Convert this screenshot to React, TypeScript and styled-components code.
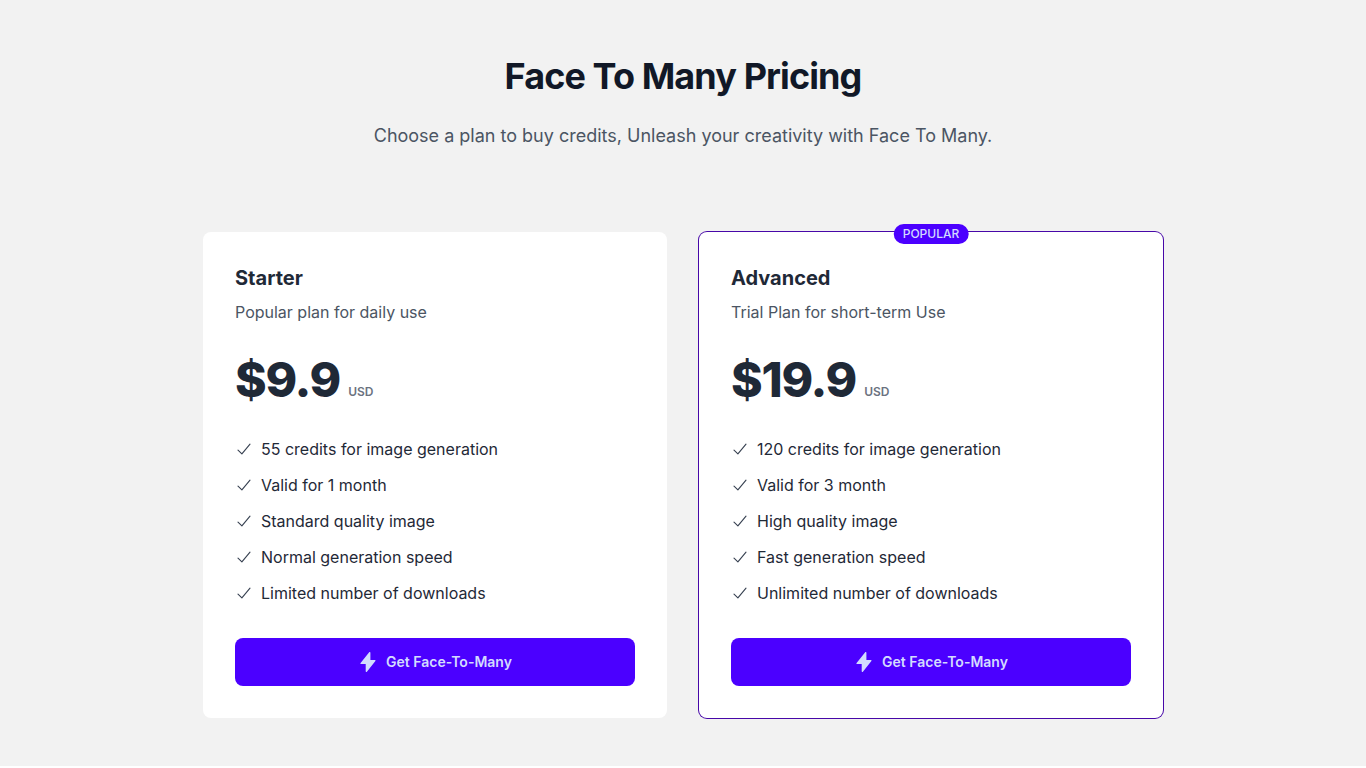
import React from "react";
import styled, { createGlobalStyle } from "styled-components";

const GlobalStyle = createGlobalStyle`
  *, *::before, *::after { box-sizing: border-box; }
  body {
    margin: 0;
    background: #fff;
    color: #1f2937;
    font-family: Inter, "Liberation Sans", sans-serif;
    font-size: 16px;
    line-height: 24px;
  }
  h1, h2, p, ul { margin: 0; padding: 0; }
`;

const Page = styled.main`
  background: #f2f2f2;
`;

const Container = styled.div`
  max-width: 1024px;
  margin: 0 auto;
  padding: 56px 32px 48px;
`;

const Header = styled.header`
  text-align: center;
  margin-bottom: 80px;
`;

const Title = styled.h1`
  color: #111827;
  font-size: 36px;
  line-height: 40px;
  font-weight: 700;
  letter-spacing: -0.025em;
`;

const Lead = styled.p`
  margin-top: 24px;
  color: #4b5563;
  font-size: 18px;
  line-height: 32px;
`;

const Plans = styled.div`
  display: grid;
  grid-template-columns: repeat(auto-fit, minmax(320px, 1fr));
  gap: 32px;
`;

const Card = styled.section<{ $popular?: boolean }>`
  position: relative;
  padding: 32px;
  border-radius: 8px;
  background: #fff;
  box-shadow: ${(p) => (p.$popular ? "0 0 0 1px #4708a8" : "none")};
`;

const Badge = styled.span`
  position: absolute;
  top: -8px;
  left: 50%;
  transform: translateX(-50%);
  padding: 0 9px;
  border-radius: 10px;
  background: #4b00ff;
  color: #d3dbff;
  font-size: 12px;
  line-height: 20px;
  font-weight: 500;
`;

const PlanName = styled.h2`
  font-size: 20px;
  line-height: 28px;
  font-weight: 700;
`;

const PlanNote = styled.p`
  margin-top: 8px;
  color: #4b5563;
`;

const Price = styled.p`
  display: flex;
  align-items: flex-end;
  gap: 8px;
  margin: 32px 0 33px;
`;

const Amount = styled.span`
  font-size: 48px;
  line-height: 48px;
  font-weight: 800;
  letter-spacing: -0.025em;
`;

const Currency = styled.span`
  color: #6b7280;
  font-size: 12px;
  line-height: 24px;
  font-weight: 600;
`;

const Features = styled.ul`
  display: grid;
  gap: 12px;
  margin-bottom: 33px;
  list-style: none;
`;

const Feature = styled.li`
  display: flex;
  align-items: center;
  gap: 8px;
`;

const BuyButton = styled.button`
  display: flex;
  align-items: center;
  justify-content: center;
  gap: 8px;
  width: 100%;
  height: 48px;
  border: 0;
  border-radius: 8px;
  background: #4b00ff;
  color: #d3dbff;
  font: 600 14px/20px Inter, "Liberation Sans", sans-serif;
  cursor: pointer;
`;

const CheckIcon = () => (
  <svg width="18" height="18" viewBox="0 0 24 24" fill="none" stroke="#374151" strokeWidth="1.5" strokeLinecap="round" strokeLinejoin="round" aria-hidden="true">
    <path d="M4 13.5l5.2 5L20 5.5" />
  </svg>
);

const BoltIcon = () => (
  <svg width="20" height="20" viewBox="0 0 20 20" fill="currentColor" aria-hidden="true">
    <path d="M12.400.700c0-.7-.8-1-1.200-.4L2.600 10.900c-.4.500-.1 1.100.5 1.100h4.600v7.300c0 .7.800 1 1.200.4l8.500-10.600c.4-.5.1-1.100-.5-1.100h-4.500z" />
  </svg>
);

type Plan = { name: string; note: string; price: string; popular?: boolean; features: string[] };

const plans: Plan[] = [
  {
    name: "Starter",
    note: "Popular plan for daily use",
    price: "$9.9",
    features: ["55 credits for image generation", "Valid for 1 month", "Standard quality image", "Normal generation speed", "Limited number of downloads"],
  },
  {
    name: "Advanced",
    note: "Trial Plan for short-term Use",
    price: "$19.9",
    popular: true,
    features: ["120 credits for image generation", "Valid for 3 month", "High quality image", "Fast generation speed", "Unlimited number of downloads"],
  },
];

export default function App() {
  return (
    <>
      <GlobalStyle />
      <Page>
        <Container>
          <Header>
            <Title>Face To Many Pricing</Title>
            <Lead>Choose a plan to buy credits, Unleash your creativity with Face To Many.</Lead>
          </Header>
          <Plans>
            {plans.map((plan) => (
              <Card key={plan.name} $popular={plan.popular}>
                {plan.popular && <Badge>POPULAR</Badge>}
                <PlanName>{plan.name}</PlanName>
                <PlanNote>{plan.note}</PlanNote>
                <Price>
                  <Amount>{plan.price}</Amount>
                  <Currency>USD</Currency>
                </Price>
                <Features>
                  {plan.features.map((text) => (
                    <Feature key={text}>
                      <CheckIcon />
                      {text}
                    </Feature>
                  ))}
                </Features>
                <BuyButton type="button">
                  <BoltIcon />
                  Get Face-To-Many
                </BuyButton>
              </Card>
            ))}
          </Plans>
        </Container>
      </Page>
    </>
  );
}
